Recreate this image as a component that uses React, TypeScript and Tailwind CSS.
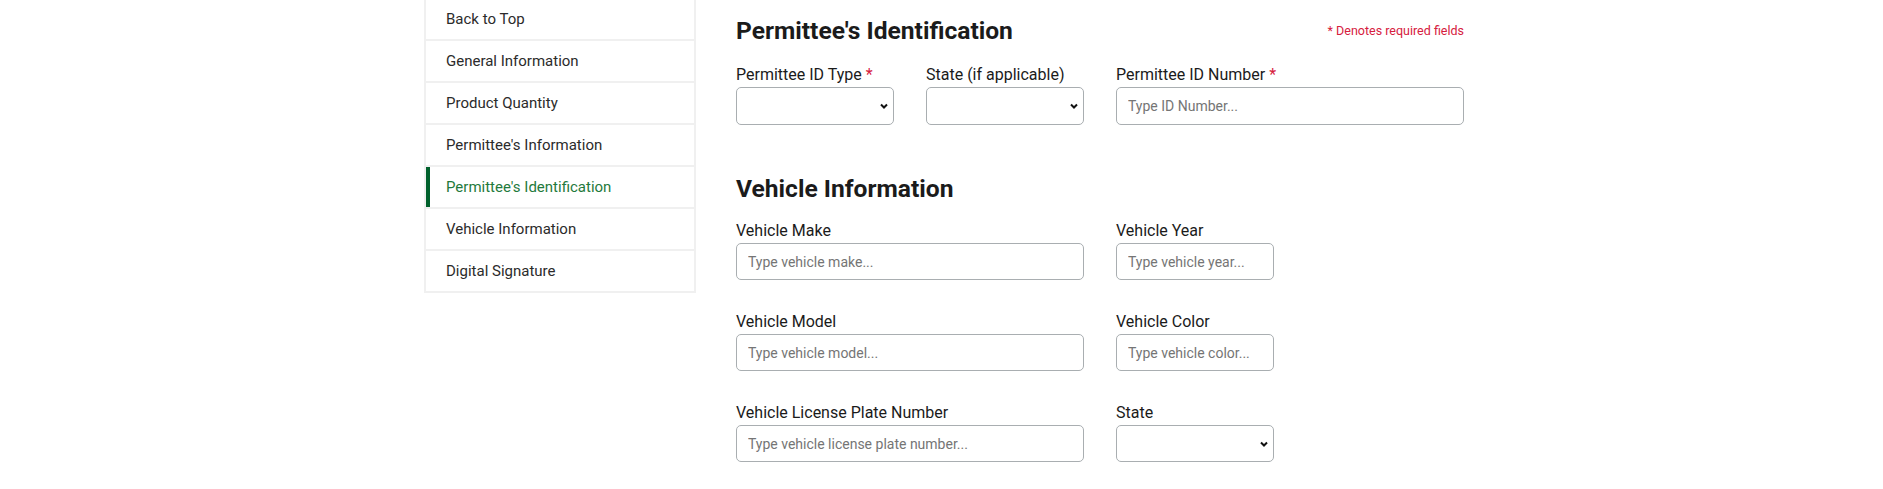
const NAV = [
  "Back to Top",
  "General Information",
  "Product Quantity",
  "Permittee's Information",
  "Permittee's Identification",
  "Vehicle Information",
  "Digital Signature",
];
const ACTIVE = "Permittee's Identification";

export default function App() {
  return (
    <div className="min-h-screen bg-white font-['Roboto',sans-serif] text-[#1b1b1b]">
      <div className="flex justify-center pl-[5px]">
        <div className="flex w-[1040px] items-start gap-10">
          <SideNav />
          <main className="w-[728px] pt-4">
            <div className="flex items-center justify-between">
              <h2 className="text-[24.6px] font-bold leading-[30px]">Permittee's Identification</h2>
              <p className="text-[12.5px] text-[#d6203e]">* Denotes required fields</p>
            </div>

            <div className="mt-[17px] grid grid-cols-4 gap-x-8">
              <Field label="Permittee ID Type" required>
                <Select />
              </Field>
              <Field label="State (if applicable)">
                <Select />
              </Field>
              <Field label="Permittee ID Number" required className="col-span-2">
                <TextInput placeholder="Type ID Number..." />
              </Field>
            </div>

            <h2 className="mt-[49px] text-[24.6px] font-bold leading-[30px]">Vehicle Information</h2>

            <div className="mt-[15px] grid grid-cols-4 gap-x-8 gap-y-[30px]">
              <Field label="Vehicle Make" className="col-span-2">
                <TextInput placeholder="Type vehicle make..." short />
              </Field>
              <Field label="Vehicle Year">
                <TextInput placeholder="Type vehicle year..." short />
              </Field>
              <div />
              <Field label="Vehicle Model" className="col-span-2">
                <TextInput placeholder="Type vehicle model..." short />
              </Field>
              <Field label="Vehicle Color">
                <TextInput placeholder="Type vehicle color..." short />
              </Field>
              <div />
              <Field label="Vehicle License Plate Number" className="col-span-2">
                <TextInput placeholder="Type vehicle license plate number..." short />
              </Field>
              <Field label="State">
                <Select short />
              </Field>
            </div>
          </main>
        </div>
      </div>
    </div>
  );
}

function SideNav() {
  return (
    <nav className="-mt-[3px] w-[272px] shrink-0">
      <ul className="border-x-2 border-t-2 border-[#f0f0f0]">
        {NAV.map((item) => {
          const active = item === ACTIVE;
          return (
            <li key={item} className="border-b-2 border-[#f0f0f0]">
              <a
                href="#"
                className={
                  active
                    ? "flex h-10 items-center border-l-4 border-[#00612c] pl-4 pt-px text-[15px] text-[#1f7a3c]"
                    : "flex h-10 items-center pl-5 pt-px text-[15px] text-[#2b2b2b]"
                }
              >
                {item}
              </a>
            </li>
          );
        })}
      </ul>
    </nav>
  );
}

function Field({
  label,
  required,
  className,
  children,
}: {
  label: string;
  required?: boolean;
  className?: string;
  children: React.ReactNode;
}) {
  return (
    <div className={className}>
      <label className="block text-[16px] leading-6">
        {label}
        {required && <span className="ml-1 text-[#d6203e]">*</span>}
      </label>
      {children}
    </div>
  );
}

function TextInput({ placeholder, short }: { placeholder: string; short?: boolean }) {
  return (
    <input
      type="text"
      placeholder={placeholder}
      className={
        (short ? "h-[37px] " : "h-[38px] ") +
        "block w-full rounded-[5px] border border-[#a9aeb1] px-[11px] font-['Roboto',sans-serif] text-[14px] placeholder:text-[#757575] focus:outline-none"
      }
    />
  );
}

function Select({ short }: { short?: boolean }) {
  return (
    <div className="relative">
      <select
        className={
          (short ? "h-[37px] " : "h-[38px] ") +
          "block w-full appearance-none rounded-[5px] border border-[#a9aeb1] bg-white px-[11px] text-[14px]"
        }
      >
        <option value=""></option>
      </select>
      <svg
        className="pointer-events-none absolute right-[6px] top-1/2 -translate-y-1/2"
        width="8"
        height="6"
        viewBox="0 0 8 6"
        fill="none"
      >
        <path d="M1 1.5 L4 4.5 L7 1.5" stroke="#111" strokeWidth="2" />
      </svg>
    </div>
  );
}
